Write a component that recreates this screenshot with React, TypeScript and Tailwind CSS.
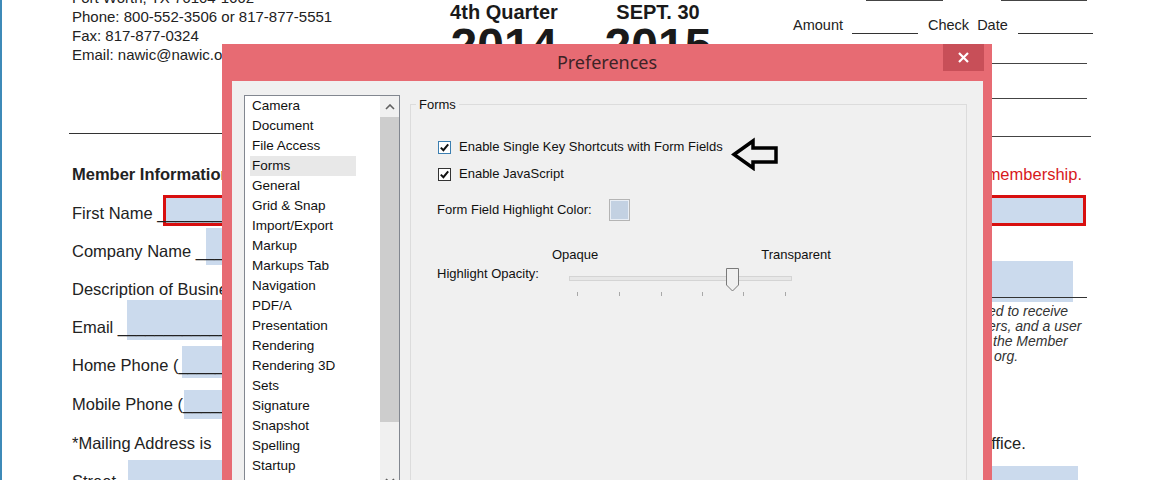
import React from "react";

const categories = [
  "Camera",
  "Document",
  "File Access",
  "Forms",
  "General",
  "Grid & Snap",
  "Import/Export",
  "Markup",
  "Markups Tab",
  "Navigation",
  "PDF/A",
  "Presentation",
  "Rendering",
  "Rendering 3D",
  "Sets",
  "Signature",
  "Snapshot",
  "Spelling",
  "Startup",
];

function Check({ focused }: { focused?: boolean }) {
  return (
    <span
      className={`flex h-[13px] w-[13px] items-center justify-center border bg-white ${
        focused ? "border-[#3c7fb1]" : "border-[#333333]"
      }`}
    >
      <svg width="11" height="11" viewBox="0 0 11 11">
        <path d="M1.8 5.6 L4.4 8.2 L9.2 2.4" fill="none" stroke="#111" strokeWidth="2" />
      </svg>
    </span>
  );
}

function OpacitySlider() {
  const ticks = [8, 50, 92, 133, 174, 216];
  return (
    <svg width="226" height="32" viewBox="0 0 226 32">
      <rect x="0.5" y="10.5" width="222" height="4" fill="#e7e7e7" stroke="#d4d4d4" />
      {ticks.map((x) => (
        <line key={x} x1={x + 0.5} y1="26" x2={x + 0.5} y2="30" stroke="#a8a8a8" />
      ))}
      <path d="M157.5 2.5 H169.5 V19 L163.5 25 L157.5 19 Z" fill="#f0f0f0" stroke="#7a7a7a" />
    </svg>
  );
}

function PreferencesDialog() {
  return (
    <div className="absolute left-[222px] top-[44px] z-10 flex h-[460px] w-[770px] flex-col bg-[#e76b73]">
      <div className="relative flex h-[37px] shrink-0 items-center justify-center">
        <span className="font-['Noto_Sans',sans-serif] text-[18px] text-[#3d2326]">Preferences</span>
        <button className="absolute right-[8px] top-0 flex h-[27px] w-[41px] items-center justify-center bg-[#c84f58]">
          <svg width="11" height="11" viewBox="0 0 11 11">
            <path d="M1 1 L10 10 M10 1 L1 10" stroke="#fff" strokeWidth="2.2" />
          </svg>
        </button>
      </div>

      <div className="ml-[10px] mr-[9px] flex min-h-0 flex-1 items-start gap-[10px] overflow-hidden bg-[#f0f0f0] pl-[12px] pt-[14px] font-['Liberation_Sans',Arial,sans-serif] text-[13px] text-[#111]">
        {/* category list */}
        <div className="flex h-[397px] w-[156px] shrink-0 border border-[#828790] bg-white">
          <div className="flex-1">
            {categories.map((c) => (
              <div
                key={c}
                className={`ml-[5px] h-[20px] w-[106px] pl-[2px] text-[13.5px] leading-[20px] ${
                  c === "Forms" ? "bg-[#e8e8e8]" : ""
                }`}
              >
                {c}
              </div>
            ))}
          </div>
          <div className="flex w-[19px] flex-col bg-[#f0f0f0]">
            <div className="flex h-[21px] shrink-0 items-center justify-center">
              <svg width="10" height="6" viewBox="0 0 10 6">
                <path d="M1 5 L5 1 L9 5" fill="none" stroke="#606060" strokeWidth="1.6" />
              </svg>
            </div>
            <div className="h-[305px] shrink-0 bg-[#cdcdcd]" />
            <div className="flex-1" />
            <div className="flex h-[21px] shrink-0 items-center justify-center">
              <svg width="10" height="6" viewBox="0 0 10 6">
                <path d="M1 1 L5 5 L9 1" fill="none" stroke="#606060" strokeWidth="1.6" />
              </svg>
            </div>
          </div>
        </div>

        {/* Forms group */}
        <fieldset className="mt-[2px] h-[420px] w-[557px] shrink-0 border border-[#dcdcdc]">
          <legend className="ml-[5px] px-[3px] leading-[15px]">Forms</legend>
          <div className="flex flex-col pl-[26px]">
            <div className="mt-[25px] flex h-[20px] items-center">
              <span className="ml-[1px]">
                <Check focused />
              </span>
              <span className="ml-[8px]">Enable Single Key Shortcuts with Form Fields</span>
            </div>
            <div className="mt-[7px] flex h-[20px] items-center">
              <span className="ml-[1px]">
                <Check />
              </span>
              <span className="ml-[8px]">Enable JavaScript</span>
            </div>
            <div className="mt-[15px] flex h-[22px] items-center">
              <span className="w-[172px]">Form Field Highlight Color:</span>
              <span className="h-[22px] w-[21px] border border-[#b4b4b4] bg-[#e9eef5] p-px">
                <span className="block h-full w-full bg-[#c3d1e2]" />
              </span>
            </div>
            <div className="mt-[26px] flex h-[16px] leading-[16px]">
              <span className="ml-[115px]">Opaque</span>
              <span className="ml-[163px]">Transparent</span>
            </div>
            <div className="mt-[3px] flex h-[32px]">
              <span className="w-[132px] leading-[15px]">Highlight Opacity:</span>
              <OpacitySlider />
            </div>
          </div>
        </fieldset>
      </div>
    </div>
  );
}

export default function App() {
  const field = "bg-[#cbdaed]";
  return (
    <div className="relative h-[480px] w-[1157px] overflow-hidden bg-white font-['Liberation_Sans',Arial,sans-serif] text-[#222] shadow-[inset_2px_0_0_#3d8ab8]">
      {/* form field highlights on the page */}
      <div className={`absolute left-[163px] top-[195px] h-[31px] w-[923px] border-[3px] border-[#d80f0f] ${field}`} />
      <div className={`absolute left-[206px] top-[228px] h-[37px] w-[400px] ${field}`} />
      <div className={`absolute left-[900px] top-[261px] h-[41px] w-[173px] ${field}`} />
      <div className={`absolute left-[127px] top-[300px] h-[40px] w-[400px] ${field}`} />
      <div className={`absolute left-[182px] top-[346px] h-[32px] w-[300px] ${field}`} />
      <div className={`absolute left-[184px] top-[390px] h-[29px] w-[300px] ${field}`} />
      <div className={`absolute left-[128px] top-[460px] h-[40px] w-[400px] ${field}`} />
      <div className={`absolute left-[900px] top-[466px] h-[30px] w-[178px] ${field}`} />

      {/* header */}
      <div className="relative flex h-[155px] items-start">
        <div className="w-[444px] shrink-0 pl-[69px] text-[15px] leading-[19px]">
          <div className="mt-[-12px] pl-[3px]">Fort Worth, TX 76104-1662</div>
          <div className="pl-[3px]">Phone: 800-552-3506 or 817-877-5551</div>
          <div className="pl-[3px]">Fax: 817-877-0324</div>
          <div className="pl-[3px]">Email: nawic@nawic.org</div>
          <div className="mt-[69px] h-px w-[320px] bg-[#333]" />
        </div>
        <div className="w-[120px] shrink-0 pt-[2px] text-center font-bold text-[#1a1a1a]">
          <div className="text-[20px] leading-[20px]">4th Quarter</div>
          <div className="mt-[0px] text-[48px] leading-[48px]">2014</div>
        </div>
        <div className="ml-[34px] w-[120px] shrink-0 pt-[2px] text-center font-bold text-[#1a1a1a]">
          <div className="text-[20px] leading-[20px]">SEPT. 30</div>
          <div className="mt-[0px] text-[48px] leading-[48px]">2015</div>
        </div>
        <div className="ml-[75px] flex-1">
          <div className="flex h-[1px]">
            <div className="ml-[73px] h-px w-[77px] bg-[#444]" />
            <div className="ml-[58px] h-px w-[86px] bg-[#444]" />
          </div>
          <div className="mt-[15px] flex h-[19px] items-center text-[14.5px]">
            <span>Amount</span>
            <span className="mb-[1px] ml-[9px] h-px w-[66px] self-end bg-[#333]" />
            <span className="ml-[10px]">Check&nbsp; Date</span>
            <span className="mb-[1px] ml-[10px] h-px w-[75px] self-end bg-[#333]" />
          </div>
          <div className="mt-[28px] h-px w-[294px] bg-[#444]" />
          <div className="mt-[34px] h-px w-[294px] bg-[#444]" />
          <div className="mt-[37px] h-px w-[298px] bg-[#444]" />
        </div>
      </div>

      {/* member information */}
      <div className="relative flex">
        <div className="w-[600px] shrink-0 whitespace-nowrap pl-[72px] text-[16.5px]">
          <div className="flex h-[39px] items-center font-bold">Member Information</div>
          <div className="flex h-[38px] items-center">First Name ________</div>
          <div className="flex h-[38px] items-center">Company Name ______</div>
          <div className="flex h-[38px] items-center">Description of Business</div>
          <div className="flex h-[38px] items-center">Email ________________</div>
          <div className="flex h-[38px] items-center">Home Phone (________</div>
          <div className="flex h-[40px] items-center">Mobile Phone (________</div>
          <div className="flex h-[38px] items-center">*Mailing Address is</div>
          <div className="flex h-[38px] items-center">Street</div>
        </div>
        <div className="flex min-w-0 flex-1 flex-col whitespace-nowrap">
          <div className="flex h-[39px] items-center justify-end pr-[75px] text-[16.5px] text-[#d7191c]">
            Please check the type of membership.
          </div>
          <div className="h-[76px]" />
          <div className="h-[27px]" />
          <div className="mr-[70px] h-px bg-[#333]" />
          <div className="ml-[388px] mt-[6px] text-[14px] italic leading-[15px] text-[#333]">
            <div>ed to receive</div>
            <div>ers, and a user</div>
            <div className="pl-[5px]">the Member</div>
            <div className="pl-[6px]">org.</div>
          </div>
          <div className="ml-[382px] mt-[69px] text-[16.5px] leading-[20px]">office.</div>
        </div>
      </div>

      <PreferencesDialog />

      {/* annotation arrow */}
      <svg className="absolute left-[731px] top-[137px] z-20" width="48" height="34" viewBox="0 0 48 34">
        <path
          d="M3 17.5 L22 4 L22 11 L45 11 L45 25 L22 25 L22 31 Z"
          fill="none"
          stroke="#000"
          strokeWidth="3.5"
          strokeLinejoin="miter"
        />
      </svg>
    </div>
  );
}
